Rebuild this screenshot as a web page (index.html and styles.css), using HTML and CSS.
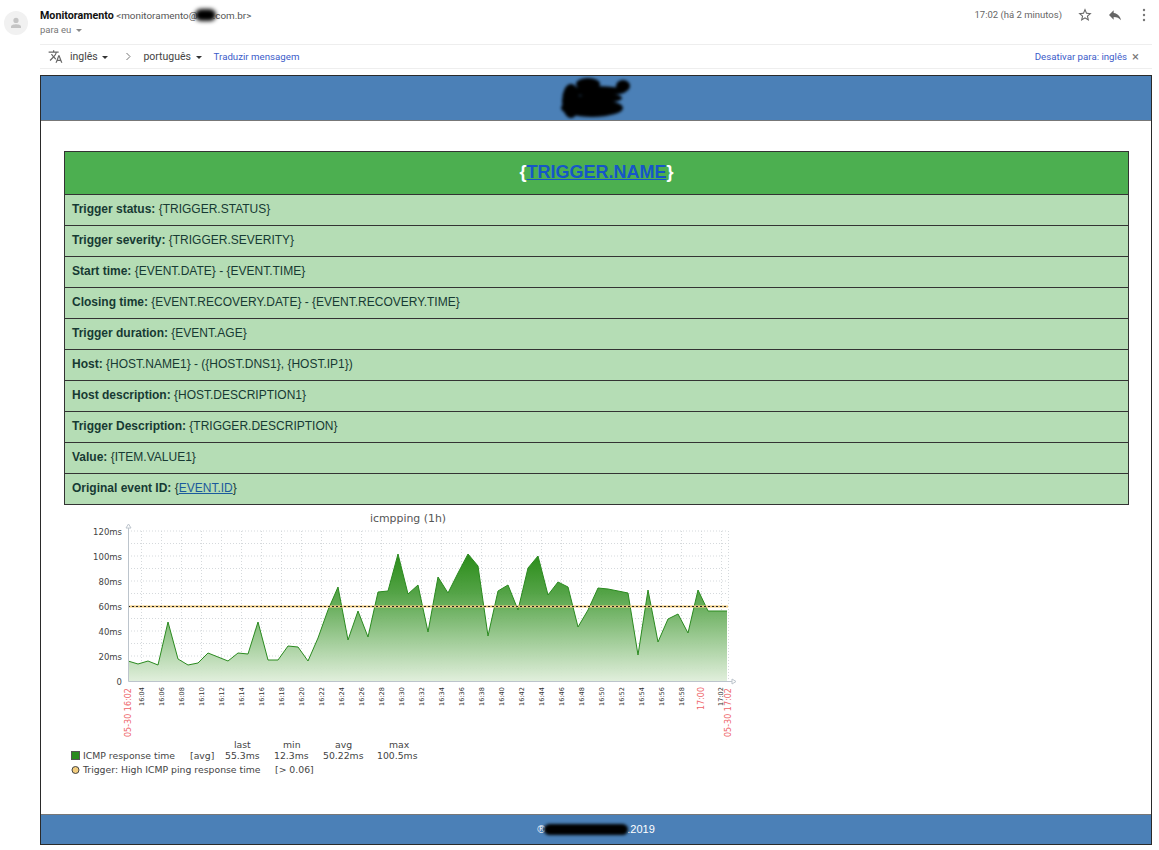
FILE: index.html
```html
<!DOCTYPE html>
<html>

<head>
    <meta charset="UTF-8">
    <title>Monitoramento</title>
    <link rel="stylesheet" href="styles.css">
</head>

<body>
    <header class="msg-head">
        <div class="avatar">
            <svg width="12" height="12" viewBox="0 0 12 12">
                <circle cx="6" cy="3.4" r="2.6" fill="#c4c4c4" />
                <path d="M1 11V9.6C1 7.9 4 7.2 6 7.2s5 .7 5 2.4V11z" fill="#c4c4c4" />
            </svg>
        </div>
        <div class="sender">
            <p class="from"><b>Monitoramento</b> <span class="addr">&lt;monitoramento@<span class="blot-addr"></span>.com.br&gt;</span></p>
            <p class="to">para eu <i class="caret caret-light"></i></p>
        </div>
        <div class="meta">
            <span class="when">17:02 (há 2 minutos)</span>
            <svg class="star" width="16" height="16" viewBox="0 0 24 24">
                <path d="M22 9.24l-7.19-.62L12 2 9.19 8.63 2 9.24l5.46 4.73L5.82 21 12 17.27 18.18 21l-1.63-7.03L22 9.24zM12 15.4l-3.76 2.27 1-4.28-3.32-2.88 4.38-.38L12 6.1l1.71 4.04 4.38.38-3.32 2.88 1 4.28L12 15.4z" fill="#666" />
            </svg>
            <svg class="reply" width="16" height="16" viewBox="0 0 24 24">
                <path d="M10 9V5l-7 7 7 7v-4.1c5 0 8.5 1.6 11 5.1-1-5-4-10-11-11z" fill="#666" />
            </svg>
            <svg class="more" width="4" height="14" viewBox="0 0 4 14">
                <circle cx="2" cy="2" r="1.2" fill="#777" />
                <circle cx="2" cy="7" r="1.2" fill="#777" />
                <circle cx="2" cy="12" r="1.2" fill="#777" />
            </svg>
        </div>
    </header>

    <div class="translate-bar">
        <svg class="tr-icon" width="15" height="15" viewBox="0 0 24 24">
            <path d="M12.87 15.07l-2.54-2.51.03-.03A17.5 17.5 0 0 0 14.07 6H17V4h-7V2H8v2H1v2h11.17C11.5 7.92 10.44 9.75 9 11.35 8.07 10.32 7.3 9.19 6.69 8h-2c.73 1.63 1.73 3.17 2.98 4.56l-5.09 5.02L4 19l5-5 3.11 3.11.76-2.04zM18.5 10h-2L12 22h2l1.12-3h4.75L21 22h2l-4.5-12zm-2.62 7l1.62-4.33L19.12 17h-3.24z" fill="#666" />
        </svg>
        <span class="lang lang-from">inglês <i class="caret"></i></span>
        <svg class="chevron" width="7" height="9" viewBox="0 0 7 9">
            <path d="M1.5 1l3.5 3.5L1.5 8" fill="none" stroke="#777" stroke-width="1" />
        </svg>
        <span class="lang lang-to">português <i class="caret"></i></span>
        <a class="tr-link">Traduzir mensagem</a>
        <a class="tr-link tr-off">Desativar para: inglês</a>
        <span class="tr-close">×</span>
    </div>

    <main class="mail">
        <div class="mail-top">
            <svg width="80" height="44" viewBox="0 0 80 44">
                <g fill="#000" class="smear">
                    <ellipse cx="32" cy="8" rx="12" ry="6" />
                    <ellipse cx="67" cy="10" rx="7" ry="6" />
                    <ellipse cx="40" cy="15" rx="30" ry="5" />
                    <ellipse cx="15" cy="25" rx="9" ry="17" />
                    <ellipse cx="44" cy="22" rx="22" ry="5" />
                    <ellipse cx="36" cy="32" rx="31" ry="9" />
                </g>
            </svg>
        </div>

        <div class="mail-body">
            <table class="report">
                <tr>
                    <th class="report-title">{<a>TRIGGER.NAME</a>}</th>
                </tr>
                <tr><td><b>Trigger status:</b> {TRIGGER.STATUS}</td></tr>
                <tr><td><b>Trigger severity:</b> {TRIGGER.SEVERITY}</td></tr>
                <tr><td><b>Start time:</b> {EVENT.DATE} - {EVENT.TIME}</td></tr>
                <tr><td><b>Closing time:</b> {EVENT.RECOVERY.DATE} - {EVENT.RECOVERY.TIME}</td></tr>
                <tr><td><b>Trigger duration:</b> {EVENT.AGE}</td></tr>
                <tr><td><b>Host:</b> {HOST.NAME1} - ({HOST.DNS1}, {HOST.IP1})</td></tr>
                <tr><td><b>Host description:</b> {HOST.DESCRIPTION1}</td></tr>
                <tr><td><b>Trigger Description:</b> {TRIGGER.DESCRIPTION}</td></tr>
                <tr><td><b>Value:</b> {ITEM.VALUE1}</td></tr>
                <tr><td><b>Original event ID:</b> {<a class="event-link">EVENT.ID</a>}</td></tr>
            </table>

            <!-- viewBox uses page coordinates so the graph numbers read straight off the screenshot -->
            <svg class="graph" width="700" height="310" viewBox="64 504 700 310">
                <defs>
                    <linearGradient id="area" x1="0" y1="554" x2="0" y2="681" gradientUnits="userSpaceOnUse">
                        <stop offset="0" stop-color="#1f860c" />
                        <stop offset="0.3" stop-color="#4a9e3c" />
                        <stop offset="1" stop-color="#dfeeda" />
                    </linearGradient>
                </defs>

                <text class="g-title" x="408" y="522" text-anchor="middle">icmpping (1h)</text>

                <path class="g-grid" d="M128 531H728M128 543.5H728M128 556H728M128 568.5H728M128 581H728M128 593.5H728M128 606H728M128 618.5H728M128 631H728M128 643.5H728M128 656H728M128 668.5H728" />
                <path class="g-grid" d="M141.5 531V681M161.5 531V681M181.5 531V681M201.5 531V681M221.5 531V681M241.5 531V681M261.5 531V681M281.5 531V681M301.5 531V681M321.5 531V681M341.5 531V681M361.5 531V681M381.5 531V681M401.5 531V681M421.5 531V681M441.5 531V681M461.5 531V681M481.5 531V681M501.5 531V681M521.5 531V681M541.5 531V681M561.5 531V681M581.5 531V681M601.5 531V681M621.5 531V681M641.5 531V681M661.5 531V681M681.5 531V681M701.5 531V681M721.5 531V681M728.5 531V681" />

                <polygon class="g-fill" fill="url(#area)" points="128,681 128,661 138,664 148,661 158,665 168,622 178,659 188,665 198,663 208,653 218,657 228,661 238,653 248,654 258,622 268,660 278,660 288,646 298,647 308,661 318,638 328,610 338,587 348,640 358,611 368,637 378,592 388,591 398,554 408,594 418,585 428,632 438,577 448,593 458,573 468,554 478,566 488,636 498,591 508,585 518,610 528,568 538,556 548,595 558,582 568,587 578,627 588,610 598,588 608,589 618,591 628,593 638,655 648,590 658,642 668,619 678,614 688,633 698,590 708,611 718,611 727,611 727,681" />
                <polyline class="g-line" points="128,661 138,664 148,661 158,665 168,622 178,659 188,665 198,663 208,653 218,657 228,661 238,653 248,654 258,622 268,660 278,660 288,646 298,647 308,661 318,638 328,610 338,587 348,640 358,611 368,637 378,592 388,591 398,554 408,594 418,585 428,632 438,577 448,593 458,573 468,554 478,566 488,636 498,591 508,585 518,610 528,568 538,556 548,595 558,582 568,587 578,627 588,610 598,588 608,589 618,591 628,593 638,655 648,590 658,642 668,619 678,614 688,633 698,590 708,611 718,611 727,611" />

                <line class="g-limit" x1="128" y1="606.5" x2="728" y2="606.5" />
                <line class="g-limit-dash" x1="128" y1="606.5" x2="728" y2="606.5" />

                <path class="g-axis" d="M128.5 528V681.5H732" />
                <path class="g-arrow" d="M128.5 524l2.5 4h-5zM736 681.5l-4-2.5v5z" />

                <g class="g-ylabels" text-anchor="end">
                    <text x="122" y="535">120ms</text>
                    <text x="122" y="560">100ms</text>
                    <text x="122" y="585">80ms</text>
                    <text x="122" y="610">60ms</text>
                    <text x="122" y="635">40ms</text>
                    <text x="122" y="660">20ms</text>
                    <text x="122" y="685">0</text>
                </g>

                <g class="g-xlabels">
                    <text transform="translate(144,706) rotate(-90)">16:04</text>
                    <text transform="translate(164,706) rotate(-90)">16:06</text>
                    <text transform="translate(184,706) rotate(-90)">16:08</text>
                    <text transform="translate(204,706) rotate(-90)">16:10</text>
                    <text transform="translate(224,706) rotate(-90)">16:12</text>
                    <text transform="translate(244,706) rotate(-90)">16:14</text>
                    <text transform="translate(264,706) rotate(-90)">16:16</text>
                    <text transform="translate(284,706) rotate(-90)">16:18</text>
                    <text transform="translate(304,706) rotate(-90)">16:20</text>
                    <text transform="translate(324,706) rotate(-90)">16:22</text>
                    <text transform="translate(344,706) rotate(-90)">16:24</text>
                    <text transform="translate(364,706) rotate(-90)">16:26</text>
                    <text transform="translate(384,706) rotate(-90)">16:28</text>
                    <text transform="translate(404,706) rotate(-90)">16:30</text>
                    <text transform="translate(424,706) rotate(-90)">16:32</text>
                    <text transform="translate(444,706) rotate(-90)">16:34</text>
                    <text transform="translate(464,706) rotate(-90)">16:36</text>
                    <text transform="translate(484,706) rotate(-90)">16:38</text>
                    <text transform="translate(504,706) rotate(-90)">16:40</text>
                    <text transform="translate(524,706) rotate(-90)">16:42</text>
                    <text transform="translate(544,706) rotate(-90)">16:44</text>
                    <text transform="translate(564,706) rotate(-90)">16:46</text>
                    <text transform="translate(584,706) rotate(-90)">16:48</text>
                    <text transform="translate(604,706) rotate(-90)">16:50</text>
                    <text transform="translate(624,706) rotate(-90)">16:52</text>
                    <text transform="translate(644,706) rotate(-90)">16:54</text>
                    <text transform="translate(664,706) rotate(-90)">16:56</text>
                    <text transform="translate(684,706) rotate(-90)">16:58</text>
                    <text transform="translate(723,706) rotate(-90)">17:02</text>
                </g>
                <g class="g-xred">
                    <text transform="translate(131,737) rotate(-90)">05-30 16:02</text>
                    <text transform="translate(704,710) rotate(-90)">17:00</text>
                    <text transform="translate(731,737) rotate(-90)">05-30 17:02</text>
                </g>

                <g class="g-legend">
                    <text x="234" y="748">last</text>
                    <text x="283" y="748">min</text>
                    <text x="335" y="748">avg</text>
                    <text x="389" y="748">max</text>
                    <rect class="g-key" x="71.5" y="751.5" width="8" height="8" />
                    <text x="83" y="759">ICMP response time</text>
                    <text x="190" y="759">[avg]</text>
                    <text x="225" y="759">55.3ms</text>
                    <text x="274" y="759">12.3ms</text>
                    <text x="323" y="759">50.22ms</text>
                    <text x="377" y="759">100.5ms</text>
                    <circle class="g-key-limit" cx="75.5" cy="770" r="3.5" />
                    <text x="83" y="773">Trigger: High ICMP ping response time</text>
                    <text x="275" y="773">[&gt; 0.06]</text>
                </g>
            </svg>
        </div>

        <footer class="mail-foot">®<span class="blot-foot"></span>.2019</footer>
    </main>
</body>

</html>
```

FILE: styles.css
```css
body {
    margin: 0;
    background: #fff;
    font-family: Roboto, "Liberation Sans", sans-serif;
    color: #222;
}

p {
    margin: 0;
}

.msg-head {
    display: flex;
    height: 44px;
}

.avatar {
    display: flex;
    align-items: center;
    justify-content: center;
    width: 24px;
    height: 24px;
    margin: 11px 12px 0 4px;
    border-radius: 50%;
    background: #f1f1f1;
}

.sender {
    flex: 1;
    padding-top: 9px;
}

.from {
    font-size: 9.9px;
    line-height: 13px;
    color: #555;
}

.from b {
    font-size: 10.7px;
    color: #111;
}

.blot-addr {
    display: inline-block;
    width: 21px;
    height: 12px;
    margin: 0 -3px -2px -3px;
    border-radius: 6px;
    background: #000;
    filter: blur(2px);
}

.to {
    margin-top: 1px;
    font-size: 9.5px;
    line-height: 13px;
    color: #777;
}

.caret {
    display: inline-block;
    margin-left: 2px;
    vertical-align: middle;
    border-left: 3px solid transparent;
    border-right: 3px solid transparent;
    border-top: 3px solid #333;
}

.caret-light {
    border-top-color: #888;
}

.meta {
    display: flex;
    align-items: flex-start;
    padding: 7px 13px 0 0;
}

.when {
    margin-right: 15px;
    font-size: 9.5px;
    line-height: 16px;
    color: #666;
}

.reply {
    margin-left: 14px;
}

.more {
    margin: 1px 0 0 19px;
}

.translate-bar {
    display: flex;
    align-items: center;
    height: 23px;
    margin: 0 7px 0 40px;
    padding-right: 13px;
    border-top: 1px solid #eee;
    border-bottom: 1px solid #eee;
    font-size: 10.5px;
}

.tr-icon {
    margin-left: 8px;
}

.lang {
    color: #444;
}

.lang-from {
    margin-left: 7px;
}

.chevron {
    margin: 0 11px 0 17px;
}

.tr-link {
    margin-left: 12px;
    font-size: 9.7px;
    color: #3b5bc9;
}

.tr-off {
    margin-left: auto;
}

.tr-close {
    margin-left: 5px;
    font-size: 13px;
    color: #777;
}

.mail {
    width: 1110px;
    margin: 6px 0 0 40px;
    border: 1px solid #2a2a2a;
}

.mail-top {
    display: flex;
    justify-content: center;
    height: 44px;
    background: #4b80b7;
    border-bottom: 1px solid #777;
}

.smear {
    filter: blur(1.5px);
}

.mail-body {
    padding: 30px 22px 0 23px;
    height: 693px;
    box-sizing: border-box;
}

.report {
    width: 100%;
    border-collapse: collapse;
    font-family: "Liberation Sans", Arial, sans-serif;
    font-size: 12px;
    color: #173a33;
}

.report th,
.report td {
    border: 1px solid #333;
    padding: 0 7px 2px;
    height: 28px;
    text-align: left;
    background: #b5ddb5;
}

.report .report-title {
    height: 40px;
    background: #4caf50;
    color: #fff;
    font-size: 18px;
    font-weight: bold;
    text-align: center;
}

.report-title a {
    color: #1656c8;
    text-decoration: underline;
}

.event-link {
    color: #1b5a9c;
    text-decoration: underline;
}

.graph {
    display: block;
    margin-top: -1px;
    font-family: "DejaVu Sans", sans-serif;
}

.g-title {
    font-size: 10.9px;
    fill: #555;
}

.g-grid {
    fill: none;
    stroke: #d5d9dc;
    stroke-width: 1;
    stroke-dasharray: 1 2;
}

.g-fill {
    opacity: 0.95;
}

.g-line {
    fill: none;
    stroke: #2a8a1f;
    stroke-width: 1;
}

.g-limit {
    stroke: #f3cd7e;
    stroke-width: 2;
}

.g-limit-dash {
    stroke: #222;
    stroke-width: 1;
    stroke-dasharray: 2 2;
}

.g-axis {
    fill: none;
    stroke: #bcc4cc;
}

.g-arrow {
    fill: #fff;
    stroke: #bcc4cc;
}

.g-ylabels text {
    font-size: 8.5px;
    fill: #444;
}

.g-xlabels text {
    font-size: 6.6px;
    fill: #333;
}

.g-xred text {
    font-size: 8px;
    fill: #ee6368;
}

.g-legend text {
    font-size: 9.3px;
    fill: #444;
}

.g-key {
    fill: #2a8a1f;
    stroke: #555;
}

.g-key-limit {
    fill: #f3cd7e;
    stroke: #444;
}

.mail-foot {
    height: 29px;
    border-top: 1px solid #777;
    background: #4b80b7;
    color: #fff;
    font-family: "Liberation Sans", Arial, sans-serif;
    font-size: 11px;
    line-height: 29px;
    text-align: center;
}

.blot-foot {
    display: inline-block;
    width: 84px;
    height: 11px;
    vertical-align: -2px;
    margin: 0 -1px;
    border-radius: 6px;
    background: #000;
    filter: blur(1.5px);
}
```
